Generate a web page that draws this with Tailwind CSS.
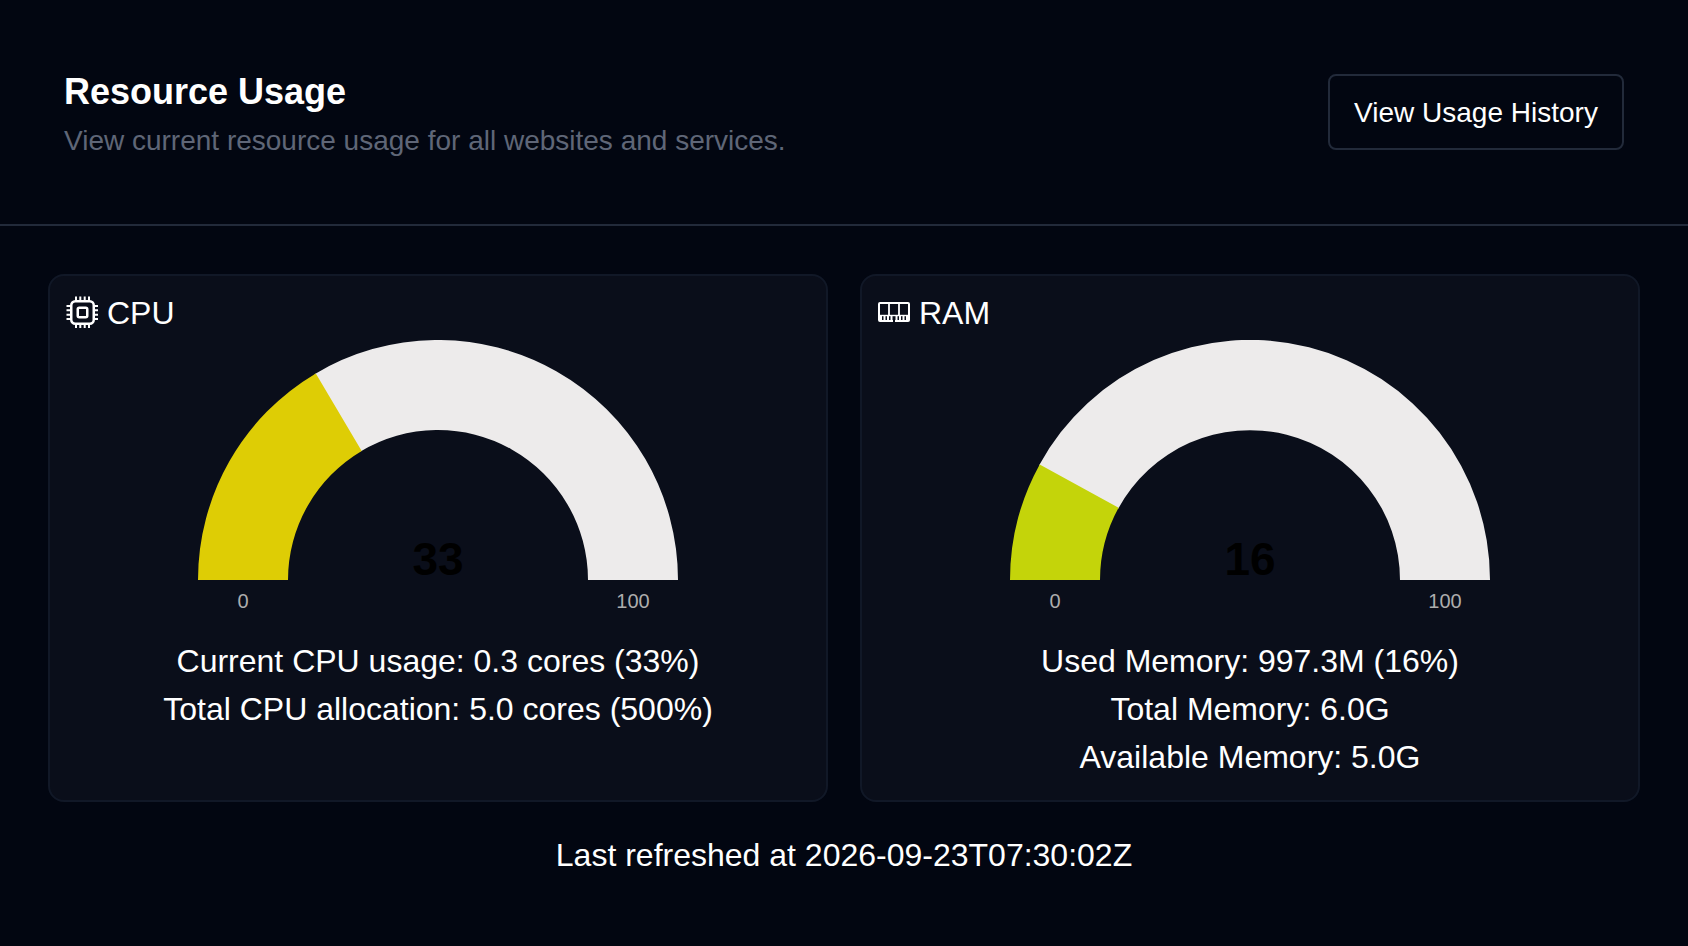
<!doctype html>
<html>
<head>
<meta charset="utf-8">
<script src="https://cdn.jsdelivr.net/npm/@tailwindcss/browser@4"></script>
</head>
<body class="bg-[#020611] text-white font-['Liberation_Sans',Arial,sans-serif]">
<div class="w-[1688px] h-[946px] overflow-hidden flex flex-col">
  <header class="h-[226px] border-b-2 border-[#222a3a] pl-16 pr-16 flex items-center justify-between">
    <div class="mt-[10px]">
      <h1 class="text-4xl font-bold leading-[40px]">Resource Usage</h1>
      <p class="text-[28px] leading-[42px] mt-[8px] text-[#5f6677]">View current resource usage for all websites and services.</p>
    </div>
    <button class="h-[76px] w-[296px] border-2 border-[#222a3a] rounded-lg text-[28px] text-white flex items-center justify-center pt-[2px]">View Usage History</button>
  </header>
  <main class="px-12 pt-[48px] grid grid-cols-2 gap-8">
    <section class="h-[528px] rounded-2xl border-2 border-[#111827] bg-[#0a0e1a] flex flex-col">
      <div class="flex items-center gap-[8px] pl-[16px] pt-[20px] h-[52px]">
        <svg class="w-8 h-8" viewBox="0 0 32 32" fill="none" stroke="white" stroke-width="2.5">
          <rect x="5.25" y="5.25" width="22.5" height="22.5" rx="4"/>
          <rect x="11.75" y="11.75" width="9.5" height="9.5" rx="1.5"/>
          <path d="M10 0.5v4.5M14.3 0.5v4.5M18.7 0.5v4.5M23 0.5v4.5M10 28v4.5M14.3 28v4.5M18.7 28v4.5M23 28v4.5M0.5 10h4.5M0.5 14.3h4.5M0.5 18.7h4.5M0.5 23h4.5M28 10h4.5M28 14.3h4.5M28 18.7h4.5M28 23h4.5" stroke-width="2"/>
        </svg>
        <span class="text-[32px] leading-[32px] ml-[1px] mt-[2px]">CPU</span>
      </div>
      <svg class="w-[480px] h-[280px] mx-auto mt-[12px]" viewBox="0 0 480 280">
        <path d="M116.5 34.2A240 240 0 0 1 480 240H390A150 150 0 0 0 162.5 111.6Z" fill="#edebeb"/>
        <path d="M0 240A240 240 0 0 1 117.8 33.4L163.7 110.9A150 150 0 0 0 90 240Z" fill="#decd05"/>
        <text x="240" y="235" text-anchor="middle" font-size="46" font-weight="700" fill="#000">33</text>
        <text x="45" y="268" text-anchor="middle" font-size="20" fill="#adadad">0</text>
        <text x="435" y="268" text-anchor="middle" font-size="20" fill="#adadad">100</text>
      </svg>
      <div class="mt-[17px] text-center text-[32px] leading-[48px]">
        <p>Current CPU usage: 0.3 cores (33%)</p>
        <p>Total CPU allocation: 5.0 cores (500%)</p>
      </div>
    </section>
    <section class="h-[528px] rounded-2xl border-2 border-[#111827] bg-[#0a0e1a] flex flex-col">
      <div class="flex items-center gap-[8px] pl-[16px] pt-[20px] h-[52px]">
        <svg class="w-8 h-8" viewBox="0 0 32 32" fill="none" stroke="white" stroke-width="2">
          <rect x="1" y="7" width="30" height="18" rx="1"/>
          <path d="M11 7v12M21 7v12" stroke-width="1.8"/>
          <path d="M1 19.5h30" stroke-width="1.4"/>
          <path d="M3 20v4.5M6.5 20v4.5M10 20v4.5M13.5 20v4.5M18.5 20v4.5M22 20v4.5M25.5 20v4.5M29 20v4.5" stroke-width="2"/>
          <path d="M15 25h2" stroke="#0a0e1a" stroke-width="2"/>
        </svg>
        <span class="text-[32px] leading-[32px] ml-[1px] mt-[2px]">RAM</span>
      </div>
      <svg class="w-[480px] h-[280px] mx-auto mt-[12px]" viewBox="0 0 480 280">
        <path d="M29 125.5A240 240 0 0 1 480 240H390A150 150 0 0 0 108 168.9Z" fill="#edebeb"/>
        <path d="M0 240A240 240 0 0 1 29.7 124.4L108.6 167.7A150 150 0 0 0 90 240Z" fill="#c4d40a"/>
        <text x="240" y="235" text-anchor="middle" font-size="46" font-weight="700" fill="#000">16</text>
        <text x="45" y="268" text-anchor="middle" font-size="20" fill="#adadad">0</text>
        <text x="435" y="268" text-anchor="middle" font-size="20" fill="#adadad">100</text>
      </svg>
      <div class="mt-[17px] text-center text-[32px] leading-[48px]">
        <p>Used Memory: 997.3M (16%)</p>
        <p>Total Memory: 6.0G</p>
        <p>Available Memory: 5.0G</p>
      </div>
    </section>
  </main>
  <p class="mt-[29px] text-center text-[32px] leading-[48px]">Last refreshed at 2026-09-23T07:30:02Z</p>
</div>
</body>
</html>
